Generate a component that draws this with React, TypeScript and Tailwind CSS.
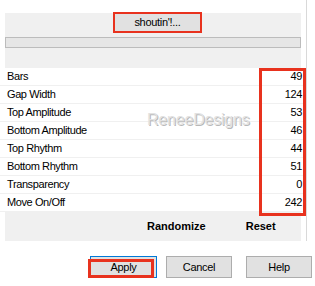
import React from 'react';

const rows: [string, number][] = [
  ['Bars', 49],
  ['Gap Width', 124],
  ['Top Amplitude', 53],
  ['Bottom Amplitude', 46],
  ['Top Rhythm', 44],
  ['Bottom Rhythm', 51],
  ['Transparency', 0],
  ['Move On/Off', 242],
];

const App: React.FC = () => {
  return (
    <div
      className="relative w-[315px] h-[286px] overflow-hidden bg-white text-[11px] text-black"
      style={{ fontFamily: '"Liberation Sans", Arial, sans-serif' }}
    >
      <div className="flex">
        <div className="w-[306px]">
          {/* Preset strip */}
          <div className="h-[13px]" />
          <div className="relative mx-[5px] h-[55px] bg-[#f0f0f0]">
            <div className="absolute left-[108px] top-[-1px] flex h-[21px] w-[89px] items-center justify-center border-2 border-[#e8321e] bg-[#e1e1e1] tracking-[-0.3px]">
              shoutin'!...
            </div>
            <div className="absolute left-0 right-0 top-[24px] h-[11px] border border-[#bcbcbc] bg-[#e6e6e6]" />
          </div>

          {/* Parameter rows */}
          <div className="relative tracking-[-0.4px]">
            {rows.map(([label, value]) => (
              <div
                key={label}
                className="flex h-[18px] items-center justify-between border-b border-[#f0f0f0] pl-[7px] pr-[4px]"
              >
                <span>{label}</span>
                <span>{value}</span>
              </div>
            ))}
            <div className="absolute left-[259px] top-0 h-[148px] w-[47px] border-[3px] border-[#e8321e]" />
          </div>

          {/* Randomize / Reset */}
          <div className="mx-[5px] flex h-[29px] items-center bg-[#f0f0f0] font-bold">
            <span className="ml-[142px]">Randomize</span>
            <span className="ml-[40px]">Reset</span>
          </div>
        </div>
        <div className="h-[241px] w-px bg-[#d9d9d9]" />
      </div>

      {/* Dialog buttons */}
      <div className="mt-[15px] flex tracking-[-0.3px]">
        <div className="relative ml-[90px] flex h-[22px] w-[67px] items-center justify-center border border-[#0078d7] bg-[#e1e1e1]">
          Apply
          <div className="absolute left-[-3px] top-[2px] h-[19px] w-[66px] border-[3px] border-[#e8321e]" />
        </div>
        <div className="ml-[9px] flex h-[22px] w-[66px] items-center justify-center border border-[#adadad] bg-[#e1e1e1]">
          Cancel
        </div>
        <div className="ml-[14px] flex h-[22px] w-[66px] items-center justify-center border border-[#adadad] bg-[#e1e1e1]">
          Help
        </div>
      </div>

      {/* Watermark */}
      <div
        className="pointer-events-none absolute left-[147px] top-[108px] text-[16px] tracking-[-0.2px] text-[#e2e2e2]"
        style={{ textShadow: '1px 1px 0 #b8b8b8' }}
      >
        ReneeDesigns
      </div>
    </div>
  );
};

export default App;
